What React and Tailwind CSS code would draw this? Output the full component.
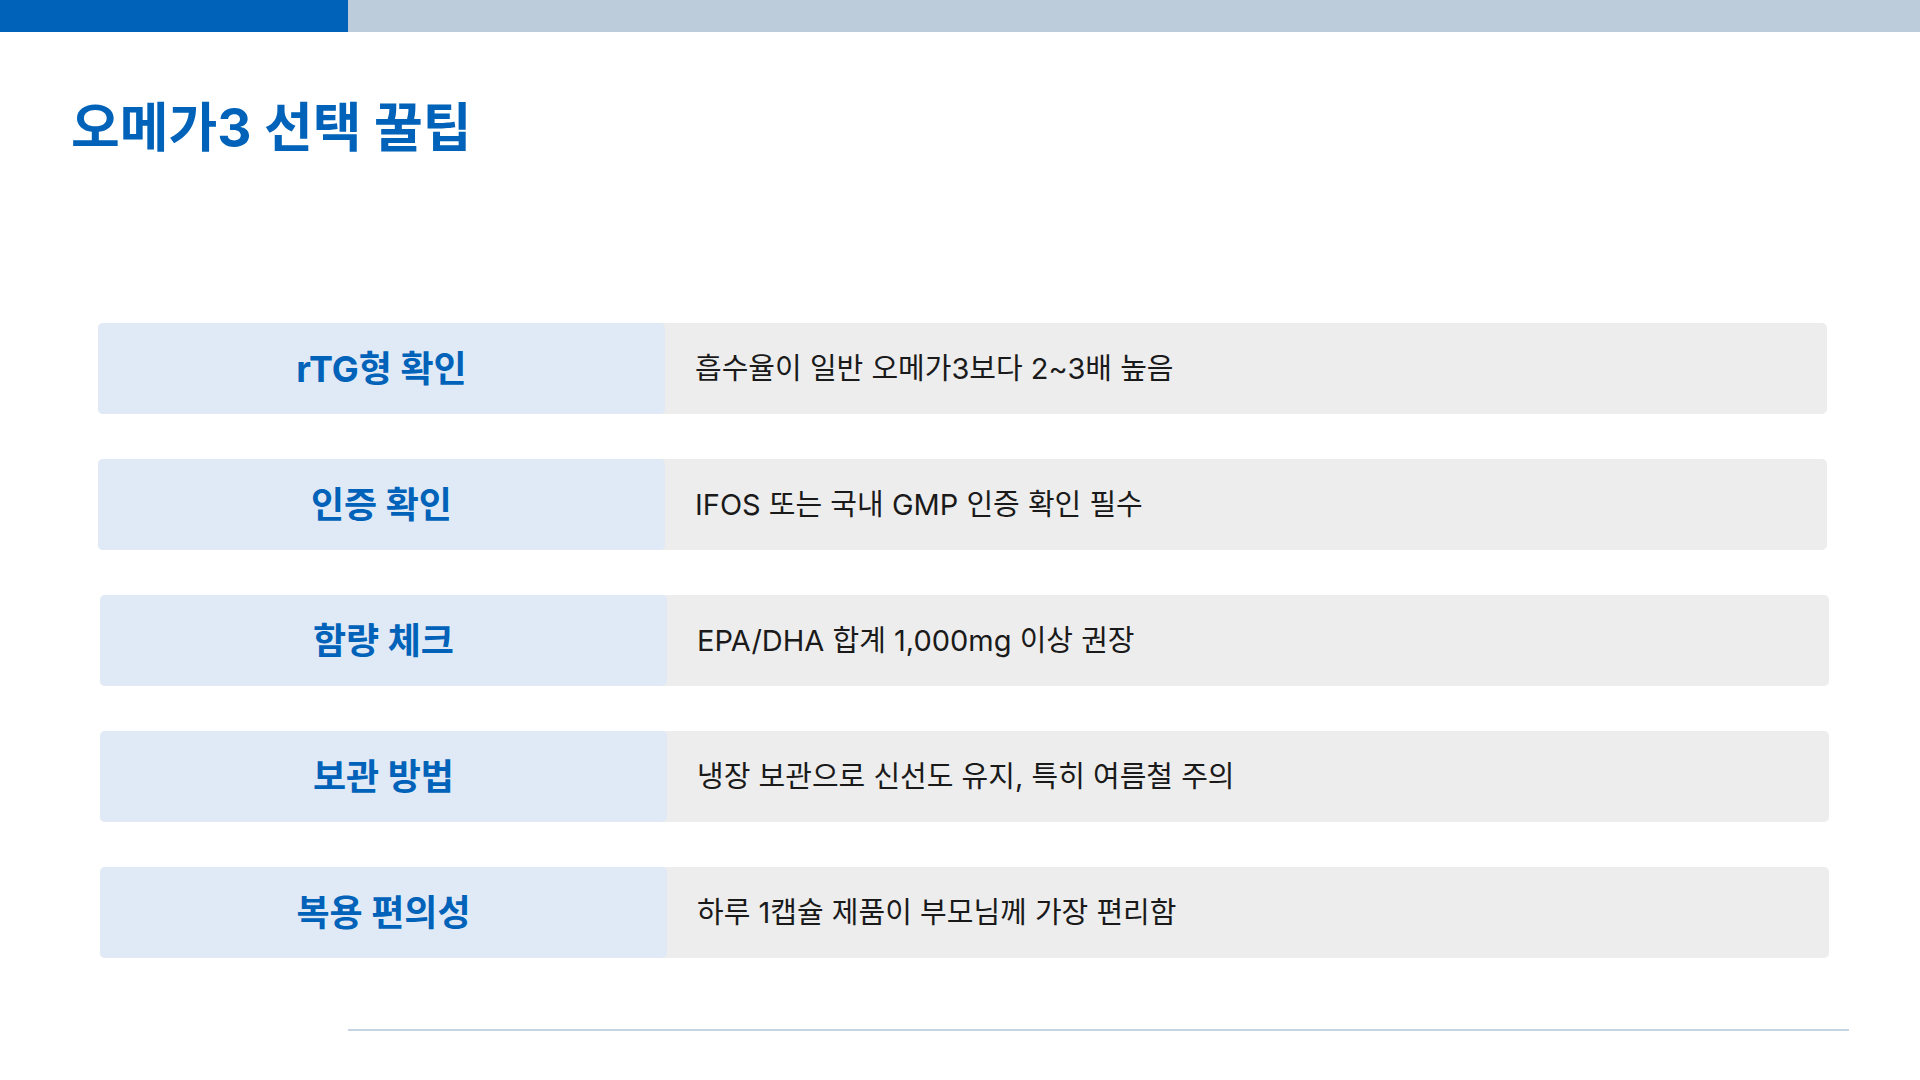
import React from "react";

const rows = [
  { label: "rTG형 확인", desc: "흡수율이 일반 오메가3보다 2~3배 높음", shift: false },
  { label: "인증 확인", desc: "IFOS 또는 국내 GMP 인증 확인 필수", shift: false },
  { label: "함량 체크", desc: "EPA/DHA 합계 1,000mg 이상 권장", shift: true },
  { label: "보관 방법", desc: "냉장 보관으로 신선도 유지, 특히 여름철 주의", shift: true },
  { label: "복용 편의성", desc: "하루 1캡슐 제품이 부모님께 가장 편리함", shift: true },
];

export default function App() {
  return (
    <div
      className="w-[1920px] h-[1080px] bg-white overflow-hidden flex flex-col"
      style={{ fontFamily: 'Inter, "Noto Sans CJK KR", "Noto Sans", sans-serif' }}
    >
      <div className="flex h-[32px] shrink-0">
        <div className="w-[348px] bg-[#0062B8]" />
        <div className="flex-1 bg-[#BCCCDB]" />
      </div>

      <h1 className="mt-[64px] pl-[71px] text-[53px] leading-[64px] font-bold text-[#0062B8]">
        오메가3 선택 꿀팁
      </h1>

      <div className="mt-[163px] flex flex-col gap-[45px]">
        {rows.map((r) => (
          <div
            key={r.label}
            className={
              "flex h-[91px] w-[1729px] rounded-[5px] bg-[#EDEDED] " +
              (r.shift ? "ml-[100px]" : "ml-[98px]")
            }
          >
            <div className="w-[567px] shrink-0 rounded-[5px] bg-[#DFEAF6] flex items-center justify-center">
              <span className="text-[36px] font-bold text-[#0062B8]">{r.label}</span>
            </div>
            <div className="flex-1 flex items-center pl-[30px]">
              <span className="text-[29px] text-[#1A1A1A]">{r.desc}</span>
            </div>
          </div>
        ))}
      </div>

      <div className="mt-[71px] ml-[348px] w-[1501px] h-[2px] bg-[#C5D4E2]" />
    </div>
  );
}
